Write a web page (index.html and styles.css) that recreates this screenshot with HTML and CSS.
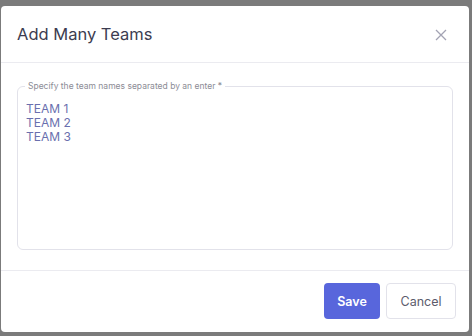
FILE: index.html
```html
<!DOCTYPE html>
<html>
<head>
    <title>Add Many Teams</title>
    <link rel="stylesheet" href="styles.css">
</head>
<body>
    <div class="modal">
        <div class="modal-header">
            <h2>Add Many Teams</h2>
            <button class="close-btn" aria-label="Close">
                <svg width="12" height="12" viewBox="0 0 12 12">
                    <path d="M1 1L11 11M11 1L1 11" stroke="#a3a3b3" stroke-width="1.3" fill="none"/>
                </svg>
            </button>
        </div>
        <div class="modal-body">
            <fieldset class="field">
                <legend>Specify the team names separated by an enter *</legend>
                <div class="teams">TEAM 1<br>TEAM 2<br>TEAM 3</div>
            </fieldset>
        </div>
        <div class="modal-footer">
            <button class="btn btn-primary">Save</button>
            <button class="btn btn-default">Cancel</button>
        </div>
    </div>
</body>
</html>
```

FILE: styles.css
```css
body {
    font-family: Inter, "Noto Sans", sans-serif;
    margin: 0;
    padding: 0;
    background-color: #7b7b7b;
}
.modal {
    width: 468px;
    height: 326px;
    margin: 6px 0 0 1px;
    background-color: white;
    border-radius: 4px;
    display: flex;
    flex-direction: column;
}
.modal-header {
    height: 56px;
    display: flex;
    align-items: center;
    justify-content: space-between;
    padding: 0 22px 0 16px;
    border-bottom: 1px solid #ebebf0;
}
h2 {
    margin: 0;
    font-size: 16.5px;
    font-weight: 400;
    color: #3c3c50;
}
.close-btn {
    background: none;
    border: none;
    padding: 0;
    margin-top: 2px;
    cursor: pointer;
    display: flex;
}
.modal-body {
    padding: 18px 16px 20px 16px;
    border-bottom: 1px solid #ebebf0;
}
.field {
    margin: 0;
    height: 161px;
    border: 1px solid #e2e2ea;
    border-radius: 6px;
    padding: 6px 8px 0 8px;
}
legend {
    font-size: 8.5px;
    color: #8c8c96;
    padding: 0 3px;
    margin-left: -1px;
}
.teams {
    font-size: 12px;
    line-height: 14px;
    color: #6a6fae;
    margin-top: 5px;
}
.modal-footer {
    flex: 1;
    display: flex;
    justify-content: flex-end;
    align-items: flex-start;
    gap: 6px;
    padding: 12px 13px 0 0;
}
.btn {
    height: 36px;
    border-radius: 4px;
    font-family: Inter, "Noto Sans", sans-serif;
    font-size: 12.5px;
    cursor: pointer;
}
.btn-primary {
    width: 56px;
    background-color: #5866dc;
    color: white;
    border: none;
    font-weight: 600;
}
.btn-default {
    width: 70px;
    background-color: white;
    color: #5c5c6c;
    border: 1px solid #e2e2ea;
}
```
